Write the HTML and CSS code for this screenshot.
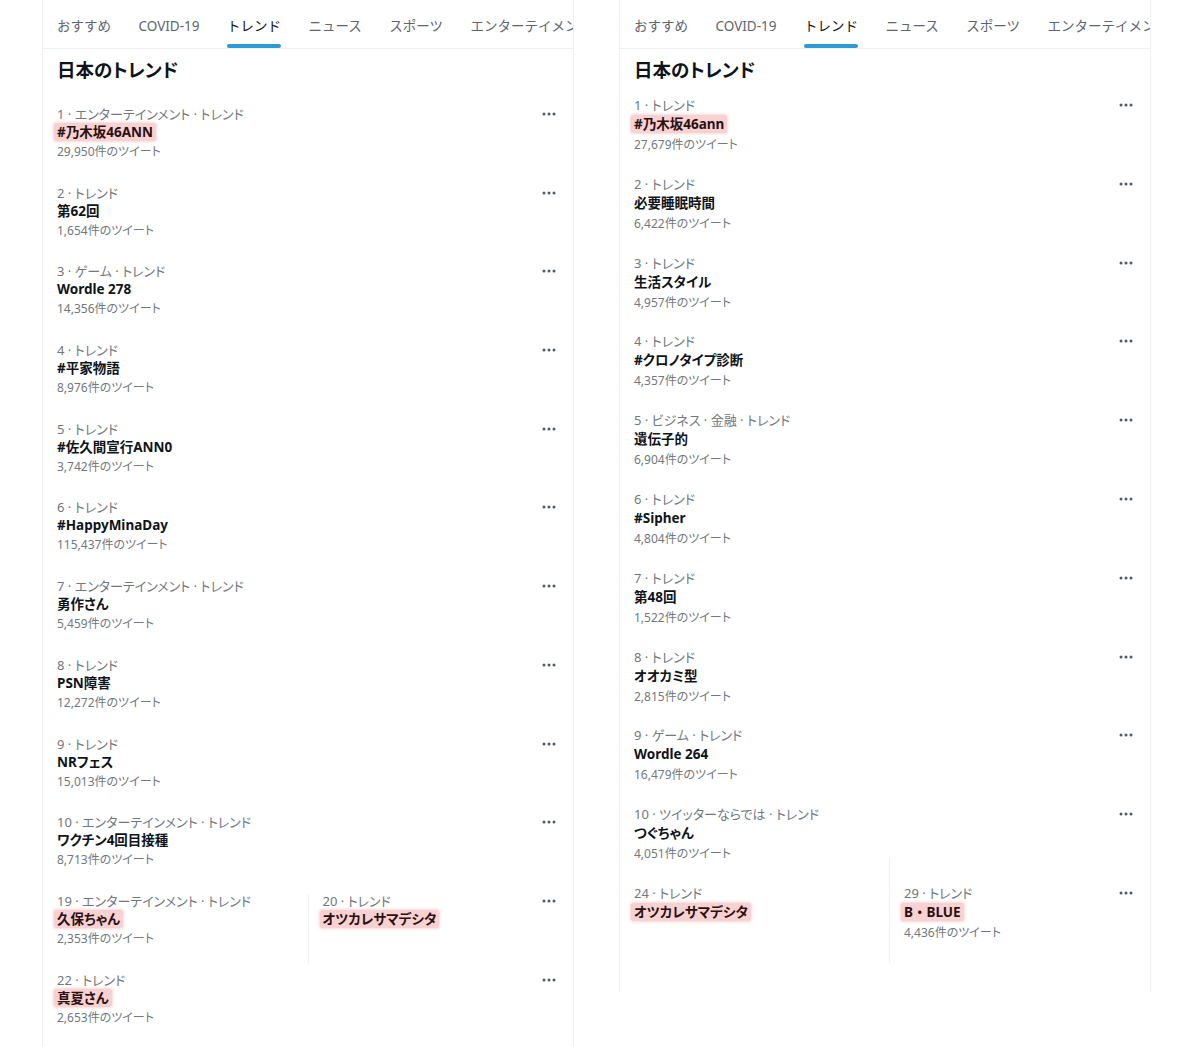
FILE: index.html
```html
<!DOCTYPE html>
<html lang="ja">
<head>
<meta charset="utf-8">
<title>日本のトレンド</title>
<link rel="stylesheet" href="styles.css">
</head>
<body>
<svg width="0" height="0" class="defs">
  <symbol id="more" viewBox="0 0 14 4"><circle cx="2" cy="2" r="1.5"/><circle cx="7" cy="2" r="1.5"/><circle cx="12" cy="2" r="1.5"/></symbol>
</svg>
<div class="page">
  <section class="panel panel-left">
    <nav class="tabs">
      <span class="tab">おすすめ</span>
      <span class="tab">COVID-19</span>
      <span class="tab tab-active">トレンド</span>
      <span class="tab">ニュース</span>
      <span class="tab">スポーツ</span>
      <span class="tab">エンターテイメント</span>
    </nav>
    <h2 class="heading">日本のトレンド</h2>

    <div class="item"><div class="body"><div class="meta">1 · エンターテインメント · トレンド</div><div class="name"><span class="hl">#乃木坂46ANN</span></div><div class="count">29,950件のツイート</div></div><svg class="more"><use href="#more"/></svg></div>
    <div class="item"><div class="body"><div class="meta">2 · トレンド</div><div class="name">第62回</div><div class="count">1,654件のツイート</div></div><svg class="more"><use href="#more"/></svg></div>
    <div class="item"><div class="body"><div class="meta">3 · ゲーム · トレンド</div><div class="name">Wordle 278</div><div class="count">14,356件のツイート</div></div><svg class="more"><use href="#more"/></svg></div>
    <div class="item"><div class="body"><div class="meta">4 · トレンド</div><div class="name">#平家物語</div><div class="count">8,976件のツイート</div></div><svg class="more"><use href="#more"/></svg></div>
    <div class="item"><div class="body"><div class="meta">5 · トレンド</div><div class="name">#佐久間宣行ANN0</div><div class="count">3,742件のツイート</div></div><svg class="more"><use href="#more"/></svg></div>
    <div class="item"><div class="body"><div class="meta">6 · トレンド</div><div class="name">#HappyMinaDay</div><div class="count">115,437件のツイート</div></div><svg class="more"><use href="#more"/></svg></div>
    <div class="item"><div class="body"><div class="meta">7 · エンターテインメント · トレンド</div><div class="name">勇作さん</div><div class="count">5,459件のツイート</div></div><svg class="more"><use href="#more"/></svg></div>
    <div class="item"><div class="body"><div class="meta">8 · トレンド</div><div class="name">PSN障害</div><div class="count">12,272件のツイート</div></div><svg class="more"><use href="#more"/></svg></div>
    <div class="item"><div class="body"><div class="meta">9 · トレンド</div><div class="name">NRフェス</div><div class="count">15,013件のツイート</div></div><svg class="more"><use href="#more"/></svg></div>
    <div class="item"><div class="body"><div class="meta">10 · エンターテインメント · トレンド</div><div class="name">ワクチン4回目接種</div><div class="count">8,713件のツイート</div></div><svg class="more"><use href="#more"/></svg></div>
    <div class="split">
      <div class="item"><div class="body"><div class="meta">19 · エンターテインメント · トレンド</div><div class="name"><span class="hl">久保ちゃん</span></div><div class="count">2,353件のツイート</div></div></div>
      <div class="vdiv vdiv-a"></div>
      <div class="item"><div class="body"><div class="meta">20 · トレンド</div><div class="name"><span class="hl">オツカレサマデシタ</span></div></div><svg class="more"><use href="#more"/></svg></div>
    </div>
    <div class="item"><div class="body"><div class="meta">22 · トレンド</div><div class="name"><span class="hl">真夏さん</span></div><div class="count">2,653件のツイート</div></div><svg class="more"><use href="#more"/></svg></div>
  </section>

  <section class="panel panel-right">
    <nav class="tabs">
      <span class="tab">おすすめ</span>
      <span class="tab">COVID-19</span>
      <span class="tab tab-active">トレンド</span>
      <span class="tab">ニュース</span>
      <span class="tab">スポーツ</span>
      <span class="tab">エンターテイメント</span>
    </nav>
    <h2 class="heading heading-tight">日本のトレンド</h2>

    <div class="item"><div class="body"><div class="meta">1 · トレンド</div><div class="name"><span class="hl">#乃木坂46ann</span></div><div class="count">27,679件のツイート</div></div><svg class="more"><use href="#more"/></svg></div>
    <div class="item"><div class="body"><div class="meta">2 · トレンド</div><div class="name">必要睡眠時間</div><div class="count">6,422件のツイート</div></div><svg class="more"><use href="#more"/></svg></div>
    <div class="item"><div class="body"><div class="meta">3 · トレンド</div><div class="name">生活スタイル</div><div class="count">4,957件のツイート</div></div><svg class="more"><use href="#more"/></svg></div>
    <div class="item"><div class="body"><div class="meta">4 · トレンド</div><div class="name">#クロノタイプ診断</div><div class="count">4,357件のツイート</div></div><svg class="more"><use href="#more"/></svg></div>
    <div class="item"><div class="body"><div class="meta">5 · ビジネス · 金融 · トレンド</div><div class="name">遺伝子的</div><div class="count">6,904件のツイート</div></div><svg class="more"><use href="#more"/></svg></div>
    <div class="item"><div class="body"><div class="meta">6 · トレンド</div><div class="name">#Sipher</div><div class="count">4,804件のツイート</div></div><svg class="more"><use href="#more"/></svg></div>
    <div class="item"><div class="body"><div class="meta">7 · トレンド</div><div class="name">第48回</div><div class="count">1,522件のツイート</div></div><svg class="more"><use href="#more"/></svg></div>
    <div class="item"><div class="body"><div class="meta">8 · トレンド</div><div class="name">オオカミ型</div><div class="count">2,815件のツイート</div></div><svg class="more"><use href="#more"/></svg></div>
    <div class="item"><div class="body"><div class="meta">9 · ゲーム · トレンド</div><div class="name">Wordle 264</div><div class="count">16,479件のツイート</div></div><svg class="more"><use href="#more"/></svg></div>
    <div class="item"><div class="body"><div class="meta">10 · ツイッターならでは · トレンド</div><div class="name">つぐちゃん</div><div class="count">4,051件のツイート</div></div><svg class="more"><use href="#more"/></svg></div>
    <div class="split split-wide">
      <div class="item"><div class="body"><div class="meta">24 · トレンド</div><div class="name"><span class="hl">オツカレサマデシタ</span></div></div></div>
      <div class="vdiv vdiv-b"></div>
      <div class="item"><div class="body"><div class="meta">29 · トレンド</div><div class="name"><span class="hl hl-wide">B・BLUE</span></div><div class="count">4,436件のツイート</div></div><svg class="more"><use href="#more"/></svg></div>
    </div>
  </section>
</div>
</body>
</html>
```
FILE: styles.css
```css
html, body {
  margin: 0;
  background: #ffffff;
}
body {
  font-family: "Noto Sans", "Noto Sans CJK JP", sans-serif;
  font-feature-settings: "palt" 1;
  color: #0f1419;
}
.defs {
  position: absolute;
  width: 0;
  height: 0;
}
.page {
  display: flex;
  align-items: flex-start;
  gap: 45px;
  padding-left: 42px;
}
.panel {
  width: 530px;
  border-left: 1px solid #eef0f1;
  border-right: 1px solid #eef0f1;
  background: #fff;
}
.panel-left {
  padding-bottom: 40px;
}
.panel-right {
  padding-bottom: 40px;
}
.tabs {
  display: flex;
  gap: 27.5px;
  height: 48px;
  padding-left: 14px;
  border-bottom: 1px solid #eef0f1;
  overflow: hidden;
  white-space: nowrap;
}
.tab {
  display: flex;
  flex-direction: column;
  flex-shrink: 0;
  padding-top: 16px;
  font-size: 13.5px;
  line-height: 20px;
  font-feature-settings: normal;
  color: #5d666e;
}
.tab-active {
  color: #0f1419;
}
.tab-active::after {
  content: "";
  margin-top: auto;
  height: 4px;
  border-radius: 2px;
  background: #2f9bd6;
}
.heading {
  margin: 0;
  padding: 9px 0 12px 14px;
  font-size: 18.5px;
  line-height: 24px;
  font-weight: 700;
  color: #0f1419;
}
.heading-tight {
  padding-bottom: 3px;
}
.item {
  display: flex;
  align-items: flex-start;
  padding: 11px 17px 11.7px 14px;
}
.body {
  flex: 1;
  min-width: 0;
}
.meta {
  font-size: 13px;
  line-height: 18px;
  color: #71787e;
  white-space: nowrap;
}
.name {
  font-size: 13.5px;
  line-height: 18px;
  font-weight: 700;
  color: #0f1419;
  white-space: nowrap;
}
.count {
  margin-top: 2px;
  font-size: 12px;
  line-height: 18px;
  color: #71787e;
  white-space: nowrap;
}
.panel-right .name {
  margin-top: 1px;
}
.panel-right .count {
  margin-top: 3px;
}
.panel-right .item {
  padding-bottom: 9.8px;
}
.more {
  width: 14px;
  height: 4px;
  margin-top: 7px;
  fill: #4f5a63;
  flex-shrink: 0;
}
.hl {
  display: inline-block;
  padding: 0 3px;
  margin-left: -3px;
  border-radius: 3px;
  background: #f8d2d2;
  box-shadow: 0 0 3px 1px #f8d6d6;
  color: #2a1011;
}
.hl-wide {
  font-feature-settings: normal;
}
.split {
  display: grid;
  grid-template-columns: 1fr 1px 1fr;
  align-items: start;
}
.split-wide {
  grid-template-columns: 269px 1px 1fr;
}
.vdiv {
  background: #eef0f1;
}
.vdiv-a {
  margin-top: 13px;
  margin-bottom: -20px;
  height: 70px;
}
.vdiv-b {
  margin-top: -16px;
  margin-bottom: -40px;
  height: 106px;
}
```
